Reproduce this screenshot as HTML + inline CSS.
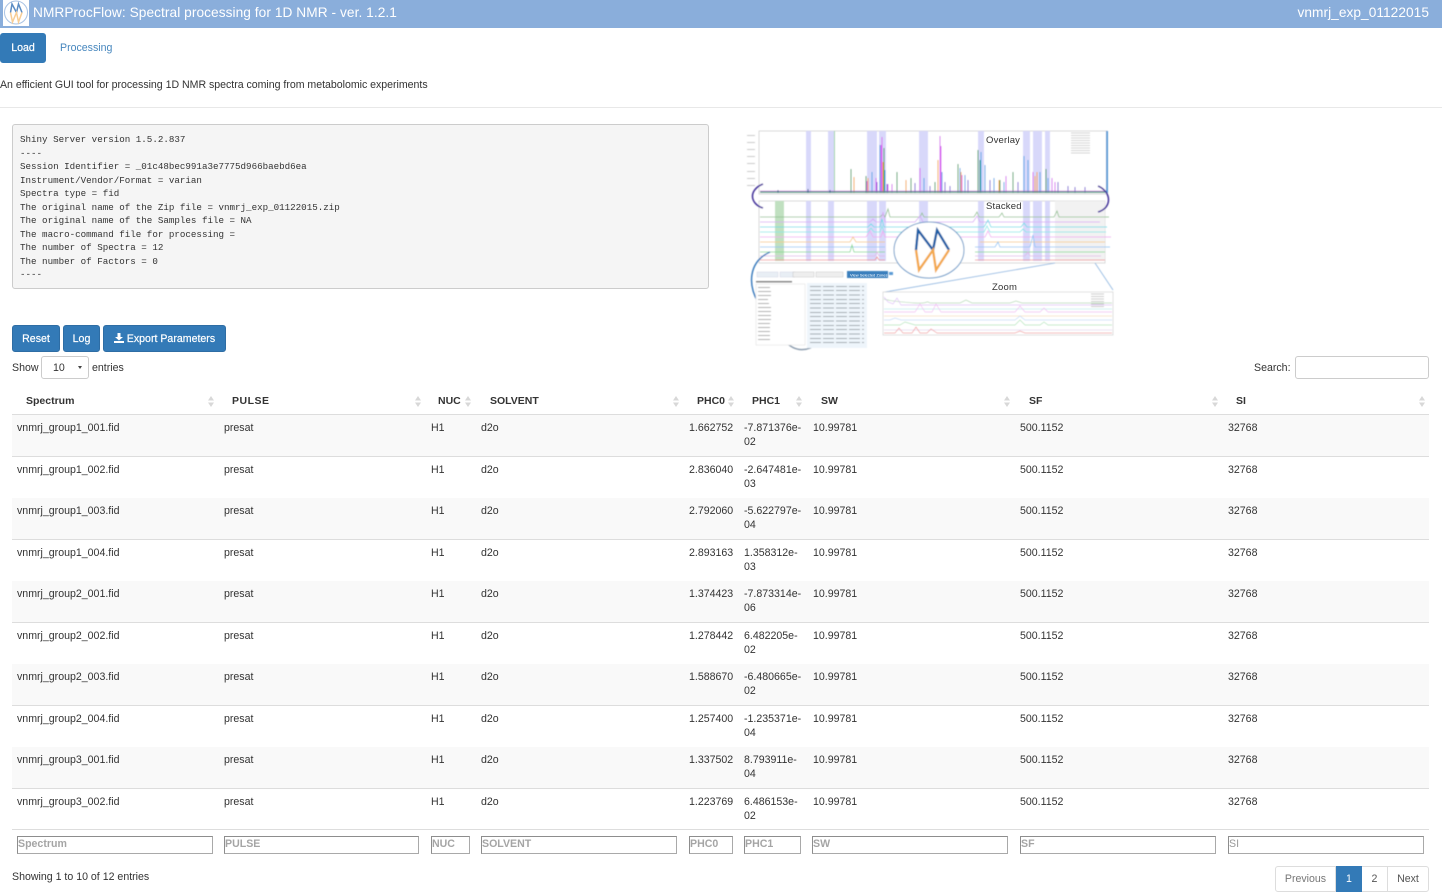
<!DOCTYPE html>
<html lang="en">
<head>
<meta charset="utf-8">
<title>NMRProcFlow</title>
<style>
html,body{margin:0;padding:0;background:#fff;}
body{width:1442px;height:892px;overflow:hidden;position:relative;font-family:"Liberation Sans",Arial,sans-serif;color:#333;font-size:10.6px;}
.a{position:absolute;white-space:nowrap;}
.hd{position:absolute;left:0;top:0;width:1442px;height:28px;background:#8aaedb;}
.btn{position:absolute;background:#337ab7;border:1px solid #2e6da4;border-radius:3px;color:#fff;text-align:center;box-sizing:border-box;font-size:10.6px;-webkit-text-stroke:.2px #fff;}
pre{position:absolute;left:12px;top:124px;width:697px;height:165px;box-sizing:border-box;margin:0;padding:8px 7px;background:#f5f5f5;border:1px solid #ccc;border-radius:3px;font-family:"Liberation Mono",monospace;font-size:9.2px;line-height:13.5px;color:#333;}
.r{position:absolute;left:12px;width:1417px;height:41px;border-bottom:1px solid #ddd;box-sizing:border-box;}
.o{background:#f9f9f9;}
.t{position:absolute;top:6px;line-height:14px;white-space:nowrap;}
.c1{left:5px}.c2{left:212px}.c3{left:419px}.c4{left:469px}.c5{left:677px}.c6{left:732px}.c7{left:801px}.c8{left:1008px}.c9{left:1216px}
.h{position:absolute;top:394px;line-height:14px;font-weight:bold;color:#333;font-size:10.5px;}
.s{position:absolute;top:396px;width:6px;height:11px;}
.f{position:absolute;top:836px;height:18px;box-sizing:border-box;border:1px solid #a9a9a9;border-top-color:#8d8d8d;border-left-color:#8d8d8d;border-width:1.5px;color:#a5a5a5;font-weight:bold;font-size:10.6px;line-height:15px;padding-left:0;white-space:nowrap;overflow:hidden;}
.pg{position:absolute;top:866px;height:26px;box-sizing:border-box;border:1px solid #ddd;text-align:center;line-height:25px;color:#777;font-size:10.6px;}
</style>
</head>
<body>
<div class="hd"></div>
<svg class="a" style="left:3px;top:0" width="26" height="26" viewBox="0 0 26 26"><rect width="26" height="26" fill="#fff"/><ellipse cx="13" cy="12.500" rx="11.500" ry="11.500" fill="#fff" stroke="#a9c3e4" stroke-width="1"/><path d="M7.500 12.500L9 4l4.500 8.500L15.500 4l3.500 8.500" fill="none" stroke="#5a8cc4" stroke-width="1.500"/><path d="M7.500 12.500L9.500 22l4-9.500 2 9.500 3.500-9.500" fill="none" stroke="#f7cd95" stroke-width="1.500"/></svg>
<div class="a" style="left:33px;top:5px;color:#fff;font-size:13.7px;line-height:16px;letter-spacing:.06px;">NMRProcFlow: Spectral processing for 1D NMR - ver. 1.2.1</div>
<div class="a" style="right:13px;top:5px;color:#fff;font-size:13.7px;line-height:16px;letter-spacing:.05px;">vnmrj_exp_01122015</div>

<div class="btn" style="left:0;top:33px;width:46px;height:30px;line-height:28px;border-color:#337ab7;">Load</div>
<div class="a" style="left:60px;top:41px;color:#337ab7;line-height:14px;opacity:.9;">Processing</div>
<div class="a" style="left:0;top:78px;line-height:14px;letter-spacing:-.023px;">An efficient GUI tool for processing 1D NMR spectra coming from metabolomic experiments</div>
<div class="a" style="left:0;top:107px;width:1442px;height:1px;background:#e8e8e8;"></div>

<pre>Shiny Server version 1.5.2.837
----
Session Identifier = _01c48bec991a3e7775d966baebd6ea
Instrument/Vendor/Format = varian
Spectra type = fid
The original name of the Zip file = vnmrj_exp_01122015.zip
The original name of the Samples file = NA
The macro-command file for processing = 
The number of Spectra = 12
The number of Factors = 0
----</pre>

<svg class="a" style="left:740px;top:120px" width="380" height="235" viewBox="740 120 380 235">
<defs><filter id="b" x="-5%" y="-5%" width="110%" height="110%"><feGaussianBlur stdDeviation=".5"/></filter></defs>
<g filter="url(#b)">
<!-- overlay plot -->
<rect x="759" y="131" width="348" height="63" fill="#fff" stroke="#d0d0d0" stroke-width=".8"/>
<g fill="#d8d8fa">
<rect x="806" y="131" width="5" height="62"/><rect x="828" y="131" width="6" height="62"/><rect x="867" y="131" width="10" height="62"/><rect x="879" y="131" width="7" height="62"/><rect x="919" y="131" width="9" height="62"/><rect x="978" y="131" width="6" height="62"/><rect x="1023" y="131" width="7" height="62"/><rect x="1033" y="131" width="9" height="62"/><rect x="1045" y="131" width="5" height="62"/>
</g>
<rect x="834" y="131" width="1" height="62" fill="#9fd5a6"/>
<rect x="1106" y="131" width="2" height="62" fill="#5b9bd5"/>
<g fill="none" stroke-width="1">
<path d="M851 193V169M866 193V176M884 193V148M897 193V172M911 193V178M935 193V182M958 193V164M978 193V150M980 193V160M1013 193V172M1046 193V169M1018 193V182M1000 193V180" stroke="#2e9e5b"/>
<path d="M854 193V177M868 193V178M881 193V156M883 193V162M906 193V180M938 193V160M961 193V172M999 193V180M1035 193V176M1037 193V172" stroke="#f5a623"/>
<path d="M867 193V181M876 193V178M882 193V137M881 193V145M920 193V168M940 193V136M941 193V146M962 193V175M1006 193V176M1033 193V172M1052 193V178M1055 193V182M888 193V184M892 193V184" stroke="#d966f0"/>
<path d="M872 193V172M880 193V145M885 193V170M924 193V178M942 193V172M960 193V168M965 193V175M981 193V152M985 193V165M1024 193V156M1028 193V160M1040 193V172M1004 193V182M994 193V178M1048 193V178" stroke="#4aa8e8"/>
<path d="M877 193V182M887 193V184M915 193V183M945 193V182M968 193V180M990 193V180M1018 193V182M1058 193V182M1068 193V186M1075 193V187M1085 193V187M930 193V186M950 193V186" stroke="#7a5cd6"/>
<path d="M760 192H1106" stroke="#3a8f7a" stroke-width="1.500"/><path d="M760 191H1106" stroke="#d45ce0" stroke-width=".5"/>
<path d="M778 193V190M808 193V189M830 193V190" stroke="#2a6a8a"/>
</g>
<g stroke="#c5c5c5" stroke-width=".7"><path d="M1071 133H1090M1071 135.500H1090M1071 138H1090M1071 140.500H1090M1071 143H1090M1071 145.500H1090M1071 148H1090M1071 150.500H1090M1071 153H1090"/></g>
<g fill="#ccc"><rect x="747" y="135" width="8" height="1"/><rect x="747" y="142" width="8" height="1"/><rect x="747" y="149" width="8" height="1"/><rect x="747" y="156" width="8" height="1"/><rect x="747" y="163" width="8" height="1"/><rect x="747" y="171" width="8" height="1"/><rect x="747" y="178" width="8" height="1"/><rect x="747" y="185" width="8" height="1"/></g>
<!-- stacked plot -->
<rect x="759" y="201" width="346" height="62" fill="#fff" stroke="#d0d0d0" stroke-width=".8"/>
<g fill="#d8d8fa">
<rect x="806" y="201" width="5" height="60"/><rect x="828" y="201" width="6" height="60"/><rect x="867" y="201" width="10" height="60"/><rect x="879" y="201" width="7" height="60"/><rect x="919" y="201" width="9" height="60"/><rect x="978" y="201" width="6" height="60"/><rect x="1023" y="201" width="7" height="60"/><rect x="1033" y="201" width="9" height="60"/><rect x="1045" y="201" width="5" height="60"/>
</g>
<rect x="775" y="201" width="9" height="60" fill="#c0e0c0"/>
<rect x="1055" y="201" width="50" height="60" fill="#f2f2f2"/>
<g fill="none" stroke-width=".8">
<path d="M760 217H880l3-3 2 3 3-8 2 8h30l2-4 2 4h50l3-5 2 5h20l3-4 2 4h50l3-6 2 6h50" stroke="#8fc08f"/>
<path d="M760 222H870l3-3 3 3h5l2-10 2 10h30l5-6 3 6h50l4-6 3 6h120" stroke="#d8a8f5"/>
<path d="M760 227H868l3-3 3 3h6l2-8 2 8h100l4-7 3 7h30l3-4 3 4h80" stroke="#66dce8"/>
<path d="M760 232H868l3-4 3 4h6l2-6 2 6h100l3-6 3 6h30l3-3 3 3h80" stroke="#7fe8e8"/>
<path d="M760 237H866l4-6 3 6h8l2-6 2 6h100l3-6 3 6h120" stroke="#f0a8f0"/>
<path d="M760 242H850l3-5 3 5H885M980 242h125" stroke="#f7c67e"/>
<path d="M760 247H885M975 247h20l3-5 2 5h30l3-12 2 12h75" stroke="#8ec4f5"/>
<path d="M760 252H850l2-7 2 7H885M975 252h130" stroke="#7fd88f"/>
<path d="M760 256H875l2-4 2 4h6M975 256h50l3-4 2 4h71" stroke="#e0b8e8"/>
<path d="M760 260H875l2-3 2 3h6M975 260h130" stroke="#f09090"/>
</g>
<!-- logo -->
<ellipse cx="929" cy="250" rx="35" ry="28" fill="#fff" stroke="#6f9cc9" stroke-width="1"/>
<path d="M916 250L918 230L933 250L937 230L949 250" fill="none" stroke="#1f5fa6" stroke-width="2.400"/>
<path d="M916 250L919 270L933 250L936 270L949 250" fill="none" stroke="#f3a94d" stroke-width="2.400"/>
<!-- arrows -->
<path d="M763 184C748 190 750 204 763 208" fill="none" stroke="#4b3a9e" stroke-width="1.600"/>
<path d="M1098 186C1112 192 1112 208 1098 212" fill="none" stroke="#4b3a9e" stroke-width="1.600"/>
<path d="M770 252C748 262 748 285 758 302" fill="none" stroke="#3f7fbf" stroke-width="1.500"/>
<path d="M786 342C795 352 808 352 818 343" fill="none" stroke="#8f9fb0" stroke-width="1.500"/>
<path d="M1055 263L885 292M1095 263L1113 290" fill="none" stroke="#8fb5e0" stroke-width=".8"/>
<!-- toolbar -->
<rect x="757" y="272" width="21" height="5" fill="#e8eef5" stroke="#ccd" stroke-width=".4"/>
<rect x="780" y="272" width="15" height="5" fill="#e8eef5" stroke="#ccd" stroke-width=".4"/>
<rect x="793" y="272" width="21" height="5" fill="#eee" stroke="#bbb" stroke-width=".4"/>
<rect x="816" y="272" width="27" height="5" fill="#eee" stroke="#bbb" stroke-width=".4"/>
<rect x="847" y="271" width="41" height="7" fill="#3a7fbd"/>
<rect x="889" y="272" width="4" height="3" fill="#5b9bd5"/>
<!-- left text area -->
<rect x="756" y="284" width="49" height="61" fill="#fff" stroke="#e2e2e2" stroke-width=".6"/>
<g fill="#aaa"><rect x="758" y="287" width="12" height="1"/><rect x="758" y="291" width="13" height="1"/><rect x="758" y="295" width="13" height="1"/><rect x="758" y="299" width="10" height="1"/><rect x="758" y="303" width="11" height="1"/><rect x="758" y="307" width="13" height="1"/><rect x="758" y="311" width="13" height="1"/><rect x="758" y="315" width="13" height="1"/><rect x="758" y="319" width="13" height="1"/><rect x="758" y="323" width="12" height="1"/><rect x="758" y="327" width="12" height="1"/><rect x="758" y="331" width="12" height="1"/><rect x="758" y="335" width="12" height="1"/><rect x="758" y="339" width="12" height="1"/></g>
<rect x="756" y="281" width="36" height="1.500" fill="#888"/>
<!-- numeric table -->
<rect x="807" y="283" width="60" height="65" fill="#eef5fb"/>
<g stroke="#a0a6ae" stroke-width=".9" stroke-dasharray="11 2"><path d="M810 286.500H864M810 290.500H864M810 295H864M810 299.500H864M810 303.500H864M810 308H864M810 312.500H864M810 316.500H864M810 321H864M810 325.500H864M810 329.500H864M810 334H864M810 338.500H864M810 342.500H864"/></g>
<!-- zoom plot -->
<rect x="883" y="292" width="230" height="43" fill="#fff" stroke="#ccc" stroke-width=".6"/>
<g fill="none" stroke-width=".7">
<path d="M884 299C890 301 900 302 915 303S925 300 930 303H960L966 300 972 303H1010L1016 301 1022 303H1112" stroke="#b5dab5"/>
<path d="M884 297L888 302 893 304 897 298 901 305H1112" stroke="#e0c0f8"/>
<path d="M884 309H1112" stroke="#bdeeee"/>
<path d="M884 312H915L920 304 925 312H932L936 304 941 312H1015L1020 306 1025 312H1040L1044 308 1048 312H1112" stroke="#f2bcf2"/>
<path d="M884 316H1112" stroke="#f9dfbd"/>
<path d="M884 320H890L895 318 901 320H1015L1020 316 1025 320H1112" stroke="#c2dbf8"/>
<path d="M884 325H900L905 322 915 325H1015L1020 320 1025 325H1040L1044 322 1048 325H1112" stroke="#aee5b8"/>
<path d="M884 330H1112" stroke="#e2d6ee"/>
<path d="M884 333H895L899 328 903 333H912L916 327 920 333H927L931 329 937 333H1015L1020 331 1025 333H1112" stroke="#f2a0a0"/>
</g>
<g stroke="#bbb" stroke-width=".7"><path d="M1091 294H1104M1091 296.500H1104M1091 299H1104M1091 301.500H1104M1091 304H1104M1091 306.500H1104"/></g>
</g>
<text x="986" y="143" font-family="Liberation Sans" font-size="9.500" letter-spacing=".2" fill="#333">Overlay</text>
<text x="986" y="209" font-family="Liberation Sans" font-size="9.500" letter-spacing=".2" fill="#333">Stacked</text>
<text x="992" y="290" font-family="Liberation Sans" font-size="9.500" letter-spacing=".2" fill="#333">Zoom</text>
<text x="850" y="276.500" font-family="Liberation Sans" font-size="4" fill="#fff">View Selected Zones</text>
</svg>

<div class="btn" style="left:12px;top:325px;width:48px;height:27px;line-height:26px;">Reset</div>
<div class="btn" style="left:63px;top:325px;width:37px;height:27px;line-height:26px;">Log</div>
<div class="btn" style="left:103px;top:325px;width:123px;height:27px;line-height:26px;">
<svg width="10" height="10" viewBox="0 0 10 10" style="vertical-align:-1px"><path d="M3.500 0H6.500V4H9L5 7.500 1 4H3.500ZM0 8H10V10H0Z" fill="#fff"/></svg> Export Parameters</div>

<div class="a" style="left:12px;top:361px;line-height:14px;">Show</div>
<div class="a" style="left:41px;top:356px;width:48px;height:23px;box-sizing:border-box;border:1px solid #ccc;border-radius:3px;background:#fff;"></div>
<div class="a" style="left:53px;top:361px;line-height:14px;">10</div>
<div class="a" style="left:78px;top:366px;width:0;height:0;border-left:2px solid transparent;border-right:2px solid transparent;border-top:3px solid #444;"></div>
<div class="a" style="left:92px;top:361px;line-height:14px;">entries</div>
<div class="a" style="left:1254px;top:361px;line-height:14px;">Search:</div>
<div class="a" style="left:1295px;top:356px;width:134px;height:23px;box-sizing:border-box;border:1px solid #ccc;border-radius:3px;background:#fff;"></div>

<div class="h" style="left:26px">Spectrum</div>
<div class="h" style="left:232px;letter-spacing:.5px">PULSE</div>
<div class="h" style="left:438px">NUC</div>
<div class="h" style="left:490px">SOLVENT</div>
<div class="h" style="left:697px">PHC0</div>
<div class="h" style="left:752px">PHC1</div>
<div class="h" style="left:821px">SW</div>
<div class="h" style="left:1029px">SF</div>
<div class="h" style="left:1236px">SI</div>
<svg class="s" style="left:208px" viewBox="0 0 6 11"><path d="M3 0L6 4.500H0ZM3 11L0 6.500H6Z" fill="#d8d8d8"/></svg>
<svg class="s" style="left:415px" viewBox="0 0 6 11"><path d="M3 0L6 4.500H0ZM3 11L0 6.500H6Z" fill="#d8d8d8"/></svg>
<svg class="s" style="left:465px" viewBox="0 0 6 11"><path d="M3 0L6 4.500H0ZM3 11L0 6.500H6Z" fill="#d8d8d8"/></svg>
<svg class="s" style="left:673px" viewBox="0 0 6 11"><path d="M3 0L6 4.500H0ZM3 11L0 6.500H6Z" fill="#d8d8d8"/></svg>
<svg class="s" style="left:728px" viewBox="0 0 6 11"><path d="M3 0L6 4.500H0ZM3 11L0 6.500H6Z" fill="#d8d8d8"/></svg>
<svg class="s" style="left:796px" viewBox="0 0 6 11"><path d="M3 0L6 4.500H0ZM3 11L0 6.500H6Z" fill="#d8d8d8"/></svg>
<svg class="s" style="left:1004px" viewBox="0 0 6 11"><path d="M3 0L6 4.500H0ZM3 11L0 6.500H6Z" fill="#d8d8d8"/></svg>
<svg class="s" style="left:1212px" viewBox="0 0 6 11"><path d="M3 0L6 4.500H0ZM3 11L0 6.500H6Z" fill="#d8d8d8"/></svg>
<svg class="s" style="left:1419px" viewBox="0 0 6 11"><path d="M3 0L6 4.500H0ZM3 11L0 6.500H6Z" fill="#d8d8d8"/></svg>
<div class="a" style="left:12px;top:414px;width:1417px;height:1px;background:#ddd;"></div>

<div class="r o" style="top:415px;height:42px"><span class="t c1">vnmrj_group1_001.fid</span><span class="t c2">presat</span><span class="t c3">H1</span><span class="t c4">d2o</span><span class="t c5">1.662752</span><span class="t c6">-7.871376e-<br>02</span><span class="t c7">10.99781</span><span class="t c8">500.1152</span><span class="t c9">32768</span></div>
<div class="r" style="top:457px;height:42px"><span class="t c1">vnmrj_group1_002.fid</span><span class="t c2">presat</span><span class="t c3">H1</span><span class="t c4">d2o</span><span class="t c5">2.836040</span><span class="t c6">-2.647481e-<br>03</span><span class="t c7">10.99781</span><span class="t c8">500.1152</span><span class="t c9">32768</span></div>
<div class="r o" style="top:498px;height:42px"><span class="t c1">vnmrj_group1_003.fid</span><span class="t c2">presat</span><span class="t c3">H1</span><span class="t c4">d2o</span><span class="t c5">2.792060</span><span class="t c6">-5.622797e-<br>04</span><span class="t c7">10.99781</span><span class="t c8">500.1152</span><span class="t c9">32768</span></div>
<div class="r" style="top:540px;height:42px"><span class="t c1">vnmrj_group1_004.fid</span><span class="t c2">presat</span><span class="t c3">H1</span><span class="t c4">d2o</span><span class="t c5">2.893163</span><span class="t c6">1.358312e-<br>03</span><span class="t c7">10.99781</span><span class="t c8">500.1152</span><span class="t c9">32768</span></div>
<div class="r o" style="top:581px;height:42px"><span class="t c1">vnmrj_group2_001.fid</span><span class="t c2">presat</span><span class="t c3">H1</span><span class="t c4">d2o</span><span class="t c5">1.374423</span><span class="t c6">-7.873314e-<br>06</span><span class="t c7">10.99781</span><span class="t c8">500.1152</span><span class="t c9">32768</span></div>
<div class="r" style="top:623px;height:42px"><span class="t c1">vnmrj_group2_002.fid</span><span class="t c2">presat</span><span class="t c3">H1</span><span class="t c4">d2o</span><span class="t c5">1.278442</span><span class="t c6">6.482205e-<br>02</span><span class="t c7">10.99781</span><span class="t c8">500.1152</span><span class="t c9">32768</span></div>
<div class="r o" style="top:664px;height:42px"><span class="t c1">vnmrj_group2_003.fid</span><span class="t c2">presat</span><span class="t c3">H1</span><span class="t c4">d2o</span><span class="t c5">1.588670</span><span class="t c6">-6.480665e-<br>02</span><span class="t c7">10.99781</span><span class="t c8">500.1152</span><span class="t c9">32768</span></div>
<div class="r" style="top:706px;height:42px"><span class="t c1">vnmrj_group2_004.fid</span><span class="t c2">presat</span><span class="t c3">H1</span><span class="t c4">d2o</span><span class="t c5">1.257400</span><span class="t c6">-1.235371e-<br>04</span><span class="t c7">10.99781</span><span class="t c8">500.1152</span><span class="t c9">32768</span></div>
<div class="r o" style="top:747px;height:42px"><span class="t c1">vnmrj_group3_001.fid</span><span class="t c2">presat</span><span class="t c3">H1</span><span class="t c4">d2o</span><span class="t c5">1.337502</span><span class="t c6">8.793911e-<br>04</span><span class="t c7">10.99781</span><span class="t c8">500.1152</span><span class="t c9">32768</span></div>
<div class="r" style="top:789px;height:41px"><span class="t c1">vnmrj_group3_002.fid</span><span class="t c2">presat</span><span class="t c3">H1</span><span class="t c4">d2o</span><span class="t c5">1.223769</span><span class="t c6">6.486153e-<br>02</span><span class="t c7">10.99781</span><span class="t c8">500.1152</span><span class="t c9">32768</span></div>

<div class="f" style="left:17px;width:196px">Spectrum</div>
<div class="f" style="left:224px;width:195px">PULSE</div>
<div class="f" style="left:431px;width:39px">NUC</div>
<div class="f" style="left:481px;width:196px">SOLVENT</div>
<div class="f" style="left:689px;width:44px">PHC0</div>
<div class="f" style="left:744px;width:57px">PHC1</div>
<div class="f" style="left:812px;width:196px">SW</div>
<div class="f" style="left:1020px;width:196px">SF</div>
<div class="f" style="left:1228px;width:196px;font-weight:normal;color:#999">SI</div>

<div class="a" style="left:12px;top:870px;line-height:14px;">Showing 1 to 10 of 12 entries</div>
<div class="pg" style="left:1275px;width:61px;border-radius:3px 0 0 3px;">Previous</div>
<div class="pg" style="left:1336px;width:26px;background:#337ab7;border-color:#337ab7;color:#fff;">1</div>
<div class="pg" style="left:1362px;width:26px;color:#555;border-left:0;">2</div>
<div class="pg" style="left:1387px;width:42px;border-radius:0 3px 3px 0;color:#555;">Next</div>
</body>
</html>
